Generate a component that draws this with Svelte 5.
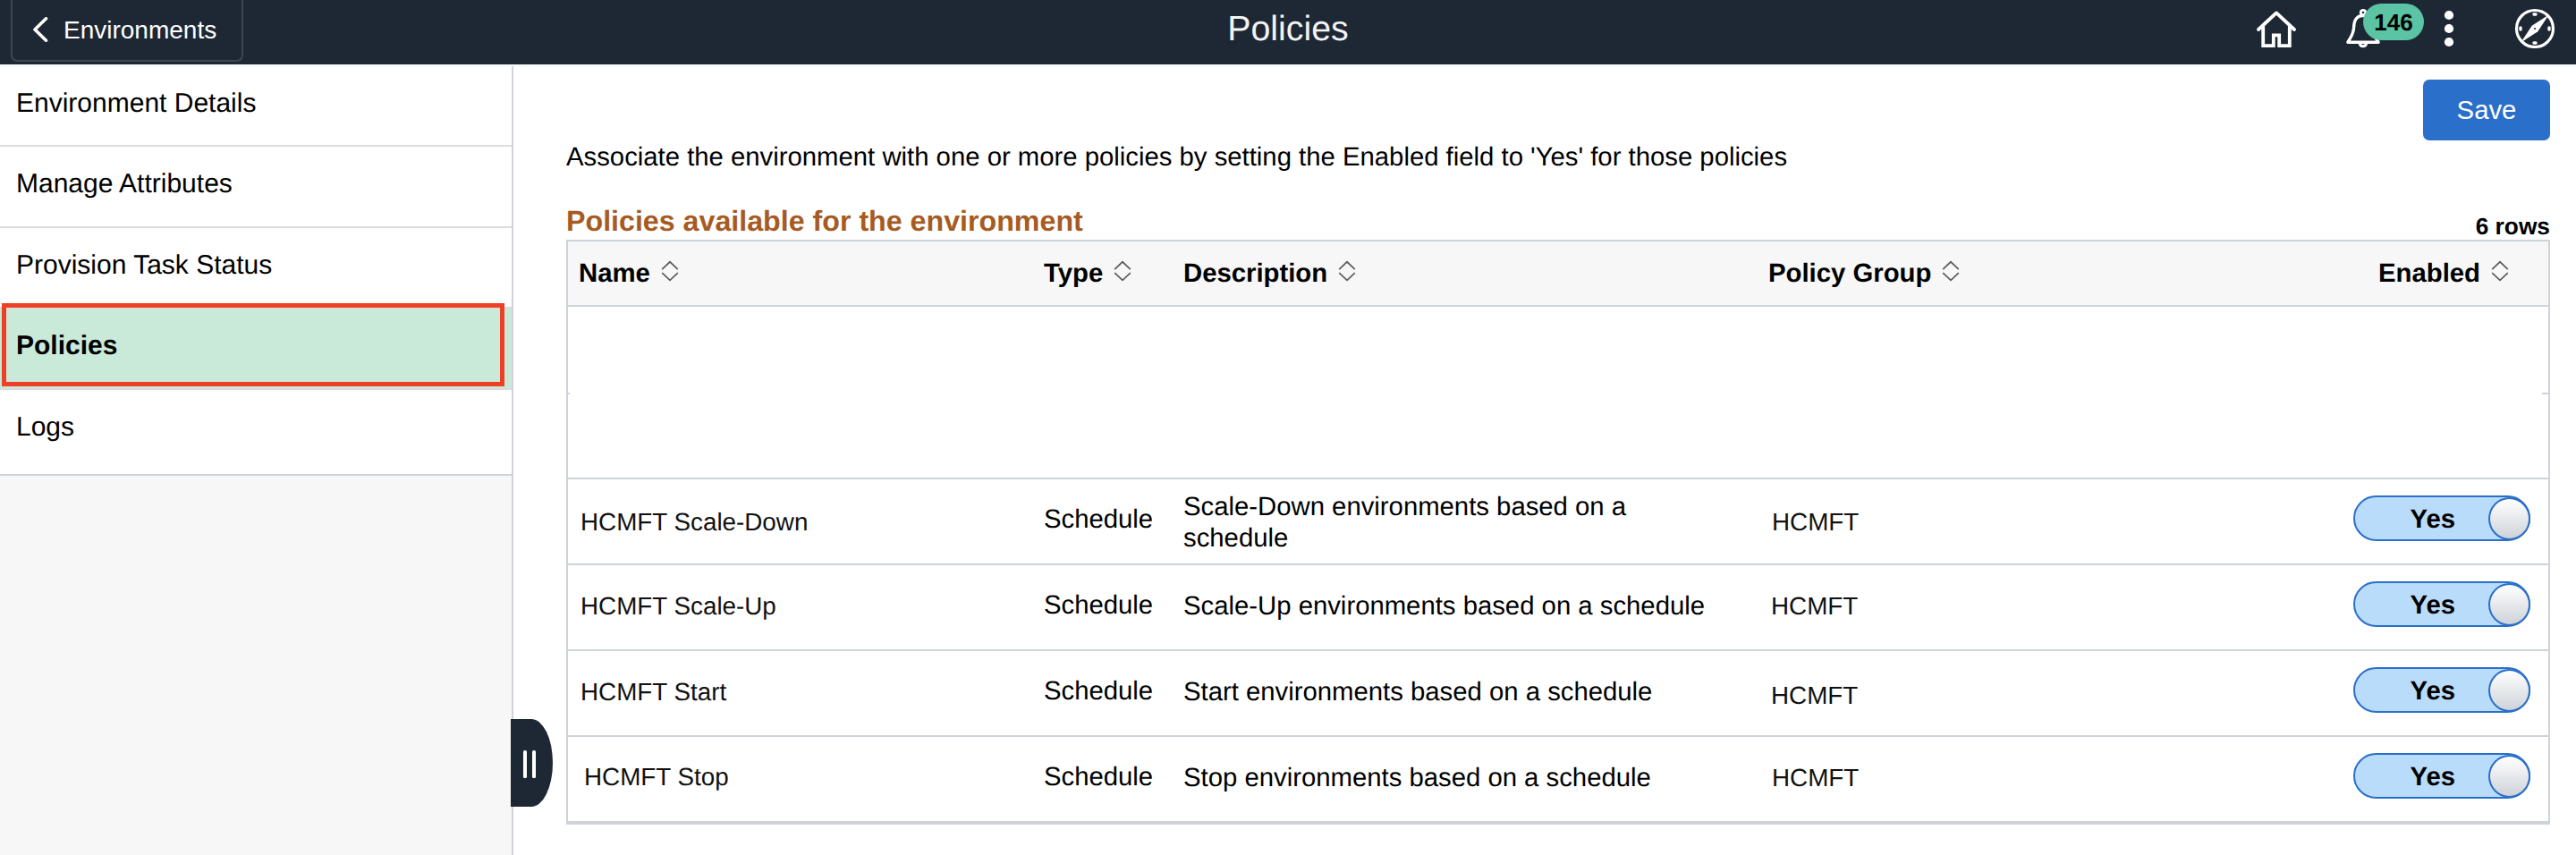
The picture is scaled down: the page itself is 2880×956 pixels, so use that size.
<script>
  const menu = [
    { label: 'Environment Details', height: 90 },
    { label: 'Manage Attributes', height: 91 },
    { label: 'Provision Task Status', height: 90 },
    { label: 'Policies', height: 91, active: true },
    { label: 'Logs', height: 96 }
  ];

  const columns = ['Name', 'Type', 'Description', 'Policy Group', 'Enabled'];

  const rows = [
    { name: 'HCMFT Scale-Down', indent: 14, nameTop: 32, description: 'Scale-Down environments based on a schedule', descTop: 13, group: 'HCMFT', groupIndent: 4, groupTop: 32 },
    { name: 'HCMFT Scale-Up', indent: 14, nameTop: 30, description: 'Scale-Up environments based on a schedule', descTop: 28, group: 'HCMFT', groupIndent: 3, groupTop: 30 },
    { name: 'HCMFT Start', indent: 14, nameTop: 30, description: 'Start environments based on a schedule', descTop: 28, group: 'HCMFT', groupIndent: 3, groupTop: 34 },
    { name: 'HCMFT Stop', indent: 18, nameTop: 29, description: 'Stop environments based on a schedule', descTop: 28, group: 'HCMFT', groupIndent: 4, groupTop: 30 }
  ];
</script>

<div class="page">
  <header class="banner">
    <button class="back">
      <svg width="18" height="28" viewBox="0 0 18 28"><path d="M15.5 1.8 3 14l12.5 12.2" fill="none" stroke="#fff" stroke-width="3.6" stroke-linecap="round" stroke-linejoin="round" /></svg>
      <span>Environments</span>
    </button>
    <h1>Policies</h1>
    <div class="actions">
      <svg class="home" width="46" height="44" viewBox="0 0 46 44" fill="none" stroke="#fff" stroke-width="3.8" stroke-linecap="round" stroke-linejoin="round">
        <path d="M3 23 23 4.4 43 23" />
        <path d="M8.2 20V41.2H19.8V29.3H26.2V41.2H37.8V20" stroke-linejoin="miter" />
      </svg>
      <div class="bell">
        <svg width="40" height="46" viewBox="0 0 40 46" fill="none" stroke="#fff" stroke-width="3.4" stroke-linejoin="round">
          <path d="M2.9 38.2H37.1C33 32 30.6 28.5 30.2 22.5 29.8 14.5 28.4 8.9 20 8.2 11.6 8.9 9.8 14.5 9.6 21.5 9.4 29 6.2 32.5 2.9 38.2Z" />
          <circle cx="20" cy="5" r="2.7" stroke-width="2.8" />
          <path d="M16.2 39.5c.5 4.2 6.9 4.2 7.4 0" stroke-width="3" />
        </svg>
        <span class="badge">146</span>
      </div>
      <svg class="dots" width="12" height="42" viewBox="0 0 12 42" fill="#fff"><circle cx="6" cy="6" r="5.1" /><circle cx="6" cy="21" r="5.1" /><circle cx="6" cy="36" r="5.1" /></svg>
      <svg class="compass" width="46" height="46" viewBox="0 0 46 46">
        <circle cx="23" cy="23" r="20.5" fill="none" stroke="#fff" stroke-width="3.2" />
        <path d="M38.6 7.4 26.3 26.2 7.4 38.6 19.7 19.8Z" fill="#fff" />
        <circle cx="23" cy="23" r="1.1" fill="#1e2834" />
        <path d="M22 7h2M22 39h2M7 22v2M39 22v2" stroke="#fff" stroke-width="3.4" stroke-linecap="round" />
      </svg>
    </div>
  </header>

  <div class="body">
    <aside>
      <nav>
        {#each menu as item}
          <a class:active={item.active} style:height="{item.height}px">{item.label}</a>
        {/each}
      </nav>
      <div class="focus-frame"></div>
      <div class="handle"><i></i><i></i></div>
    </aside>

    <main>
      <div class="toolbar"><button class="save">Save</button></div>
      <p>Associate the environment with one or more policies by setting the Enabled field to 'Yes' for those policies</p>
      <div class="caption">
        <h2>Policies available for the environment</h2>
        <span>6 rows</span>
      </div>
      <div class="table">
        <div class="row head">
          {#each columns as column}
            <div class="th">
              <span>{column}</span>
              <svg width="20" height="24" viewBox="0 0 20 24" fill="none" stroke="#5c5c5c" stroke-width="1.7"><path d="M1.2 10.2 10 1.8l8.8 8.4M1.2 14.2 10 22.4l8.8-8.2" /></svg>
            </div>
          {/each}
        </div>
        <div class="blank first"></div>
        <div class="blank"></div>
        {#each rows as row}
          <div class="row">
            <div class="alt" style:padding="{row.nameTop}px 0 0 {row.indent}px">{row.name}</div>
            <div class="type">Schedule</div>
            <div class="desc" style:padding-top="{row.descTop}px">{row.description}</div>
            <div class="alt" style:padding="{row.groupTop}px 0 0 {row.groupIndent}px">{row.group}</div>
            <div class="enabled"><div class="switch"><span>Yes</span><b></b></div></div>
          </div>
        {/each}
      </div>
    </main>
  </div>
</div>

<style>
  :global(body) { margin: 0; background: #fff; }
  .page { width: 2880px; height: 956px; overflow: hidden; display: flex; flex-direction: column; background: #fff; color: #000; font-family: "Liberation Sans", Arial, sans-serif; font-size: 30px; line-height: 34px; text-rendering: geometricPrecision; }
  .page * { box-sizing: border-box; }
  button { font: inherit; border: 0; margin: 0; }
  h1, h2, p { margin: 0; }

  .banner { height: 74px; flex: none; background: #1e2834; border-bottom: 2px solid #f4f5f6; display: grid; grid-template-columns: 1fr auto 1fr; }
  .back { margin-left: 12px; width: 260px; height: 69px; padding: 0 0 2px 22px; background: transparent; border: 2px solid #3e464f; border-top: 0; border-radius: 0 0 7px 7px; display: flex; align-items: center; gap: 17px; color: #fff; font-size: 28px; }
  .back span { padding-top: 3px; }
  h1 { font-size: 39.3px; font-weight: 400; line-height: 65px; color: #f2f3f4; }
  .actions { display: flex; justify-content: flex-end; align-items: flex-start; padding-right: 23px; }
  .actions svg { display: block; }
  .home { margin: 10px 54px 0 0; }
  .bell { position: relative; padding-top: 9px; margin-right: 70px; }
  .badge { position: absolute; left: 20px; top: 4px; width: 68px; height: 41px; border-radius: 21px; background: #5ac4a4; color: #000; font-size: 26px; font-weight: 700; line-height: 43px; text-align: center; }
  .dots { margin: 11px 67px 0 0; }
  .compass { margin-top: 9px; }

  .body { flex: 1; display: flex; }
  aside { position: relative; width: 574px; background: #f7f7f7; border-right: 2px solid #ced3d9; }
  nav { display: flex; flex-direction: column; background: #fff; }
  nav a { padding: 25px 0 0 18px; border-bottom: 2px solid #dcdcdc; }
  nav a:last-child { border-color: #ced3d9; }
  nav a.active { background: #c9ead8; font-weight: 700; }
  .focus-frame { position: absolute; left: 2px; top: 265px; width: 562px; height: 93px; border: 5px solid #ee4024; }
  .handle { position: absolute; left: 571px; top: 730px; width: 47px; height: 98px; background: #1e2834; border-radius: 0 24px 24px 0 / 0 49px 49px 0; display: flex; gap: 6px; padding: 35px 0 0 14px; }
  .handle i { width: 4px; height: 31px; border-radius: 1.5px; background: #fff; }

  main { flex: 1; padding: 15px 29px 0 59px; font-size: 29.3px; }
  .toolbar { display: flex; justify-content: flex-end; }
  .save { width: 142px; height: 68px; padding: 0; border-radius: 7px; background: #2a6fc9; color: #fff; }
  p { padding-top: 2px; margin-bottom: -1px; }
  .caption { height: 76px; display: flex; justify-content: space-between; align-items: flex-start; }
  h2 { padding-top: 37px; font-size: 32.2px; line-height: 36px; color: #a65b22; }
  .caption span { padding-top: 46px; font-size: 26.3px; font-weight: 700; line-height: 30px; }

  .table { border: 2px solid #ced3d9; border-bottom-width: 4px; }
  .row { display: grid; grid-template-columns: 532px 156px 654px 651px 1fr; height: 96px; border-bottom: 2px solid #ced3d9; }
  .row:last-child { height: 94px; border-bottom: 0; }
  .head { height: 73px; background: #f7f7f7; font-weight: 700; }
  .th { display: flex; gap: 12px; padding-top: 19px; }
  .th svg { margin-top: 2px; }
  .th:first-child { padding-left: 12px; }
  .th:last-child { padding-left: 31px; }
  .blank { height: 95px; border-bottom: 2px solid #ced3d9; }
  .blank.first { height: 98px; border: 0; background: linear-gradient(#ced3d9, #ced3d9) 0 100% / 2px 2px no-repeat, linear-gradient(#ced3d9, #ced3d9) 100% 100% / 7px 2px no-repeat; }
  .alt { font-size: 27.8px; line-height: 32px; color: #111; }
  .type { padding-top: 28px; }
  .desc { padding-right: 60px; line-height: 35px; }
  .enabled { padding: 18px 20px 0 0; display: flex; justify-content: flex-end; }
  .switch { width: 198px; height: 51px; border: 2px solid #2a6fc9; border-radius: 26px; background: #badcfb; display: flex; justify-content: flex-end; gap: 37px; font-weight: 700; line-height: 49px; }
  .switch b { width: 47px; height: 48px; margin: -0.5px -2px 0 0; border: 2px solid #2a6fc9; border-radius: 50%; background: linear-gradient(#fff, #ced3d9); }
</style>
